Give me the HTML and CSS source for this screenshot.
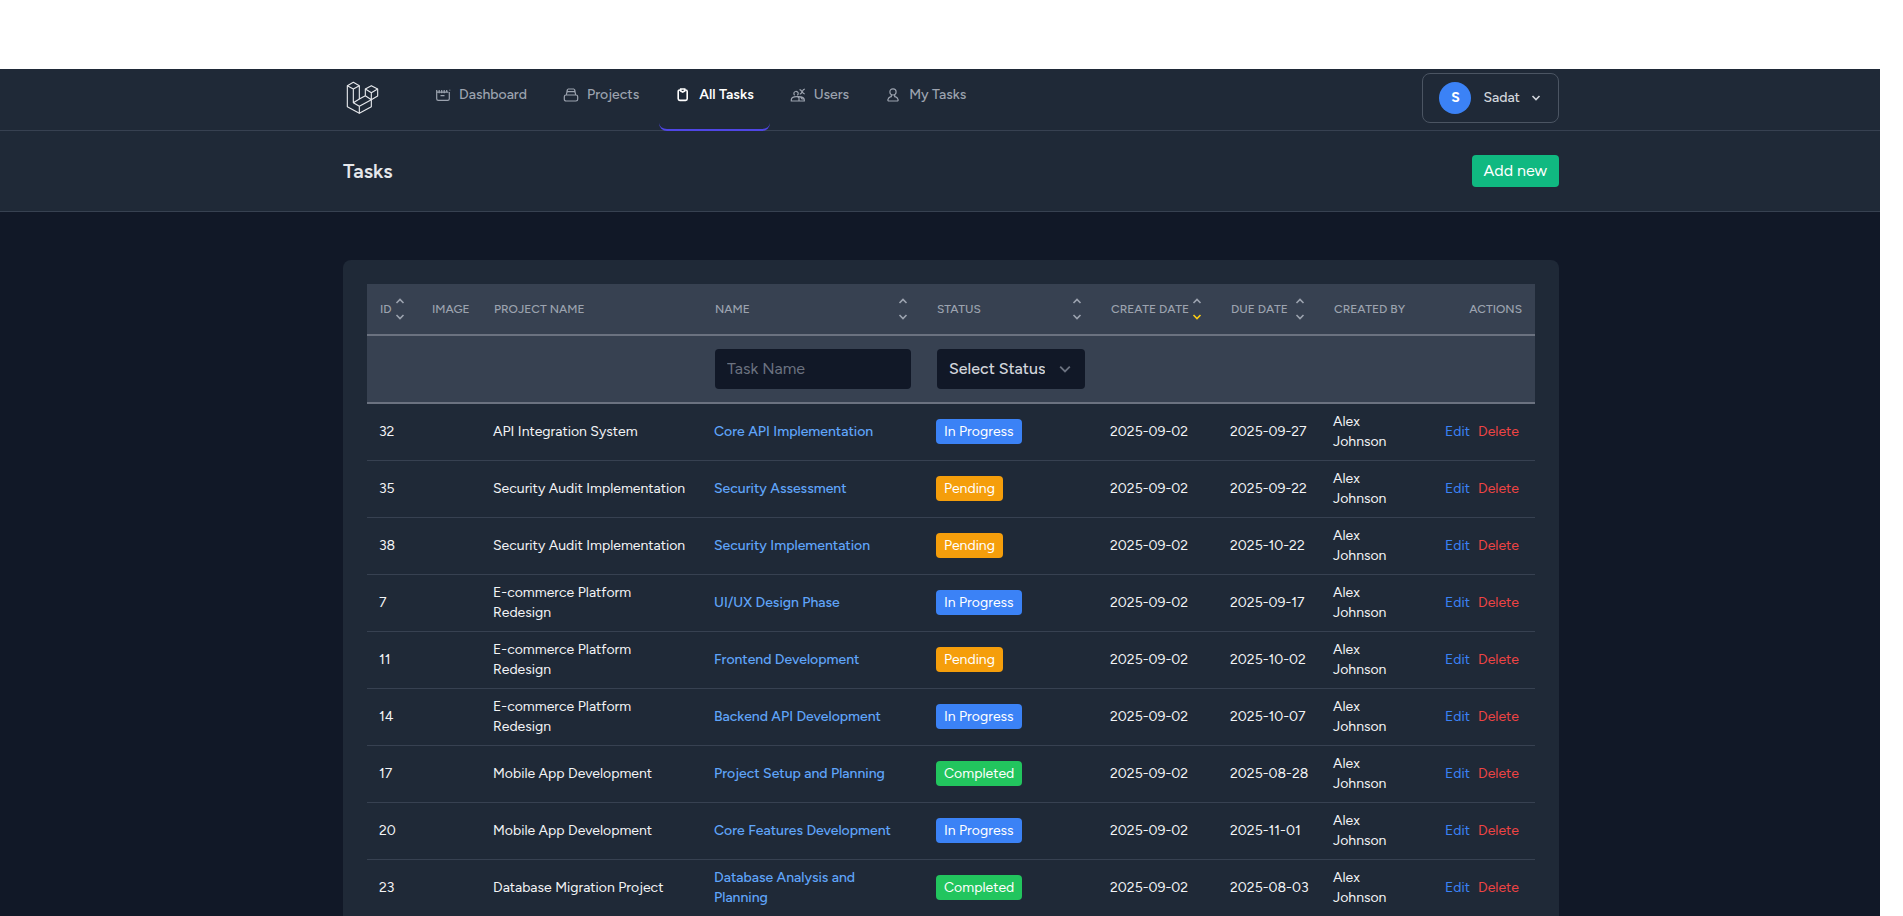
FILE: index.html
```html
<!DOCTYPE html>
<html lang="en">
<head>
    <meta charset="UTF-8">
    <title>Tasks</title>
    <link rel="stylesheet" href="styles.css">
</head>
<body>
    <svg class="sprite" aria-hidden="true">
        <symbol id="chevron-up" viewBox="0 0 16 16"><path d="M4.5 10 8 6.5l3.5 3.5"/></symbol>
        <symbol id="chevron-down" viewBox="0 0 16 16"><path d="M4.5 6 8 9.5 11.5 6"/></symbol>
    </svg>
    <nav class="navbar">
        <div class="container navbar-inner">
            <a href="#" class="logo" aria-label="Home">
                <svg viewBox="39 60 108 108" fill="none" stroke="#e5e7eb" stroke-width="3.4" stroke-linejoin="round">
                    <path d="M70 67 52 77v63l36 20 36-20v-21l19-11V87l-19-10-18 10v20l-18 10V77z"/>
                    <path d="M52 77l18 10 18-10M70 87v41l18 11v21M70 128l18-11M88 139l36-20-18-12M106 87l18 11 19-11M124 98v21"/>
                </svg>
            </a>
            <div class="nav-links">
                <a href="#" class="nav-link">
                    <svg class="nav-icon" viewBox="0 0 16 16"><path d="M1.7 3v8.800c0 1 .6 1.600 1.600 1.600h9.400c1 0 1.600-.6 1.600-1.600V5M1.700 5.200h11.600M4.200 3v3.200M6.700 3v3.200M9.200 3v3.200M11.700 3v2.500M14.800 2.800v.8M5.500 8.700h4"/></svg>
                    Dashboard
                </a>
                <a href="#" class="nav-link">
                    <svg class="nav-icon" viewBox="0 0 16 16"><path d="M4.8 2h6.4M3.8 4.7 4.6 2.2M12.2 4.7l-.8-2.5M3.3 7.8l.5-2.2c.1-.6.5-.9 1-.9h6.4c.5 0 .9.3 1 .9l.5 2.2M3 8h10c1 0 1.7.7 1.7 1.7v2.6c0 1-.7 1.700-1.700 1.700H3c-1 0-1.700-.7-1.700-1.700V9.700C1.300 8.700 2 8 3 8z"/></svg>
                    Projects
                </a>
                <a href="#" class="nav-link active">
                    <svg class="nav-icon" viewBox="0 0 16 16"><path d="M5.500 3H4.800C3.800 3 3.200 3.600 3.200 4.600v7.200c0 1 .6 1.600 1.600 1.600h5.800c1 0 1.600-.6 1.600-1.600V4.600c0-1-.6-1.600-1.600-1.600h-.700M5.700 2h4v2l-2 1-2-1z"/></svg>
                    All Tasks
                </a>
                <a href="#" class="nav-link">
                    <svg class="nav-icon" viewBox="0 0 16 16"><path d="M1.300 14v-1.200C1.300 10.800 3.500 9.600 6.500 9.600h2c3 0 5.800 1.200 5.800 3.200V14zM7.500 9.600l1.500 1.400v3M10.500 9.800l1.500 2.200h1.500M4.600 8.200C3.300 7 3.800 4.800 5.500 4.500c1.500-.3 3 .8 2.700 2.300-.1.700-.5 1.200-1 1.500M9.500 2.600c2.600 0 2.400 4.200 5.200 4.200M14.800 2.200c-3 .3-2.200 4.600-5 5"/></svg>
                    Users
                </a>
                <a href="#" class="nav-link">
                    <svg class="nav-icon" viewBox="0 0 16 16"><path d="M8 1.800c1.900 0 3.100 1.300 3.100 3S9.900 8 8 8 4.900 6.500 4.900 4.800 6.100 1.800 8 1.800zM5.800 9.600c-1.500.5-2.500 1.500-2.900 3.100-.2.800.2 1.300 1 1.300h8.200c.8 0 1.200-.5 1-1.300-.4-1.600-1.400-2.600-2.900-3.100M6.300 7.800v1.800H5.600M9.700 7.800v1.800h.7"/></svg>
                    My Tasks
                </a>
            </div>
            <button type="button" class="user-menu">
                <span class="avatar">S</span>
                <span>Sadat</span>
                <svg class="chevron"><use href="#chevron-down"/></svg>
            </button>
        </div>
    </nav>
    <header class="page-header">
        <div class="container header-inner">
            <h2>Tasks</h2>
            <a href="#" class="btn-add">Add new</a>
        </div>
    </header>
    <main class="container">
        <div class="card">
            <table class="tasks">
                <colgroup>
                    <col class="col-id">
                    <col class="col-image">
                    <col class="col-project">
                    <col class="col-name">
                    <col class="col-status">
                    <col class="col-created">
                    <col class="col-due">
                    <col class="col-author">
                    <col>
                </colgroup>
                <thead>
                    <tr class="titles">
                        <th><div class="sortable">ID <span class="sort"><svg class="chevron"><use href="#chevron-up"/></svg><svg class="chevron"><use href="#chevron-down"/></svg></span></div></th>
                        <th>Image</th>
                        <th>Project Name</th>
                        <th><div class="sortable">Name <span class="sort"><svg class="chevron"><use href="#chevron-up"/></svg><svg class="chevron"><use href="#chevron-down"/></svg></span></div></th>
                        <th><div class="sortable">Status <span class="sort"><svg class="chevron"><use href="#chevron-up"/></svg><svg class="chevron"><use href="#chevron-down"/></svg></span></div></th>
                        <th><div class="sortable">Create Date <span class="sort"><svg class="chevron"><use href="#chevron-up"/></svg><svg class="chevron sorted"><use href="#chevron-down"/></svg></span></div></th>
                        <th><div class="sortable">Due Date <span class="sort"><svg class="chevron"><use href="#chevron-up"/></svg><svg class="chevron"><use href="#chevron-down"/></svg></span></div></th>
                        <th>Created By</th>
                        <th class="right">Actions</th>
                    </tr>
                    <tr class="filters">
                        <th></th>
                        <th></th>
                        <th></th>
                        <th><input type="text" class="field" placeholder="Task Name" aria-label="Task Name"></th>
                        <th>
                            <div class="select-wrap">
                                <select class="field" aria-label="Status">
                                    <option value="">Select Status</option>
                                    <option value="pending">Pending</option>
                                    <option value="in_progress">In Progress</option>
                                    <option value="completed">Completed</option>
                                </select>
                                <svg class="select-arrow" viewBox="0 0 20 20"><path d="M6 8l4 4 4-4"/></svg>
                            </div>
                        </th>
                        <th></th>
                        <th></th>
                        <th></th>
                        <th></th>
                    </tr>
                </thead>
                <tbody>
                    <tr>
                        <td>32</td>
                        <td></td>
                        <td>API Integration System</td>
                        <td><a href="#" class="task-link">Core API Implementation</a></td>
                        <td><span class="badge in-progress">In Progress</span></td>
                        <td class="date">2025-09-02</td>
                        <td class="date">2025-09-27</td>
                        <td>Alex Johnson</td>
                        <td class="actions"><a href="#" class="edit">Edit</a><a href="#" class="delete">Delete</a></td>
                    </tr>
                    <tr>
                        <td>35</td>
                        <td></td>
                        <td>Security Audit Implementation</td>
                        <td><a href="#" class="task-link">Security Assessment</a></td>
                        <td><span class="badge pending">Pending</span></td>
                        <td class="date">2025-09-02</td>
                        <td class="date">2025-09-22</td>
                        <td>Alex Johnson</td>
                        <td class="actions"><a href="#" class="edit">Edit</a><a href="#" class="delete">Delete</a></td>
                    </tr>
                    <tr>
                        <td>38</td>
                        <td></td>
                        <td>Security Audit Implementation</td>
                        <td><a href="#" class="task-link">Security Implementation</a></td>
                        <td><span class="badge pending">Pending</span></td>
                        <td class="date">2025-09-02</td>
                        <td class="date">2025-10-22</td>
                        <td>Alex Johnson</td>
                        <td class="actions"><a href="#" class="edit">Edit</a><a href="#" class="delete">Delete</a></td>
                    </tr>
                    <tr>
                        <td>7</td>
                        <td></td>
                        <td>E-commerce Platform Redesign</td>
                        <td><a href="#" class="task-link">UI/UX Design Phase</a></td>
                        <td><span class="badge in-progress">In Progress</span></td>
                        <td class="date">2025-09-02</td>
                        <td class="date">2025-09-17</td>
                        <td>Alex Johnson</td>
                        <td class="actions"><a href="#" class="edit">Edit</a><a href="#" class="delete">Delete</a></td>
                    </tr>
                    <tr>
                        <td>11</td>
                        <td></td>
                        <td>E-commerce Platform Redesign</td>
                        <td><a href="#" class="task-link">Frontend Development</a></td>
                        <td><span class="badge pending">Pending</span></td>
                        <td class="date">2025-09-02</td>
                        <td class="date">2025-10-02</td>
                        <td>Alex Johnson</td>
                        <td class="actions"><a href="#" class="edit">Edit</a><a href="#" class="delete">Delete</a></td>
                    </tr>
                    <tr>
                        <td>14</td>
                        <td></td>
                        <td>E-commerce Platform Redesign</td>
                        <td><a href="#" class="task-link">Backend API Development</a></td>
                        <td><span class="badge in-progress">In Progress</span></td>
                        <td class="date">2025-09-02</td>
                        <td class="date">2025-10-07</td>
                        <td>Alex Johnson</td>
                        <td class="actions"><a href="#" class="edit">Edit</a><a href="#" class="delete">Delete</a></td>
                    </tr>
                    <tr>
                        <td>17</td>
                        <td></td>
                        <td>Mobile App Development</td>
                        <td><a href="#" class="task-link">Project Setup and Planning</a></td>
                        <td><span class="badge completed">Completed</span></td>
                        <td class="date">2025-09-02</td>
                        <td class="date">2025-08-28</td>
                        <td>Alex Johnson</td>
                        <td class="actions"><a href="#" class="edit">Edit</a><a href="#" class="delete">Delete</a></td>
                    </tr>
                    <tr>
                        <td>20</td>
                        <td></td>
                        <td>Mobile App Development</td>
                        <td><a href="#" class="task-link">Core Features Development</a></td>
                        <td><span class="badge in-progress">In Progress</span></td>
                        <td class="date">2025-09-02</td>
                        <td class="date">2025-11-01</td>
                        <td>Alex Johnson</td>
                        <td class="actions"><a href="#" class="edit">Edit</a><a href="#" class="delete">Delete</a></td>
                    </tr>
                    <tr>
                        <td>23</td>
                        <td></td>
                        <td>Database Migration Project</td>
                        <td><a href="#" class="task-link">Database Analysis and Planning</a></td>
                        <td><span class="badge completed">Completed</span></td>
                        <td class="date">2025-09-02</td>
                        <td class="date">2025-08-03</td>
                        <td>Alex Johnson</td>
                        <td class="actions"><a href="#" class="edit">Edit</a><a href="#" class="delete">Delete</a></td>
                    </tr>
                </tbody>
            </table>
        </div>
    </main>
    <div class="gutter"></div>
</body>
</html>
```
FILE: styles.css
```css
* {
    box-sizing: border-box;
}
body {
    margin: 0;
    padding: 69px 1px 0 0;
    height: 100vh;
    overflow: hidden;
    font-family: Figtree, Lato, sans-serif;
    font-size: 14px;
    line-height: 20px;
    color: #f3f4f6;
    background: linear-gradient(#fff 69px, #111827 69px);
}
a {
    text-decoration: none;
    color: inherit;
}
.sprite {
    display: none;
}
.container {
    max-width: 1280px;
    margin: 0 auto;
    padding: 0 32px;
}
/* white strip beside the page */
.gutter {
    position: fixed;
    top: 0;
    right: 0;
    bottom: 0;
    width: 23px;
    background-color: #fff;
}

/* navigation */
.navbar {
    background-color: #1f2937;
    border-bottom: 1px solid #374151;
}
.navbar-inner {
    display: flex;
    height: 61px;
}
.logo {
    margin-top: 11px;
}
.logo svg {
    display: block;
    width: 36px;
    height: 36px;
}
.nav-links {
    display: flex;
    gap: 4px;
    margin: 0 auto -1px 40px;
}
.nav-link {
    display: flex;
    align-items: center;
    gap: 8px;
    padding: 0 16px 9px;
    border-bottom: 2px solid transparent;
    border-radius: 8px;
    font-weight: 500;
    color: #9ca3af;
}
.nav-link:hover {
    color: #e5e7eb;
}
.nav-link.active {
    font-weight: 600;
    color: #fff;
    border-bottom-color: #4f46e5;
}
.nav-icon {
    width: 16px;
    height: 16px;
    fill: none;
    stroke: currentColor;
    stroke-width: 1.2;
}
.nav-link.active .nav-icon {
    stroke-width: 1.6;
}
.user-menu {
    display: flex;
    align-items: center;
    height: 50px;
    margin-top: 4px;
    padding: 0 14px 0 16px;
    background: transparent;
    border: 1px solid #4b5563;
    border-radius: 8px;
    font: inherit;
    font-weight: 500;
    color: #d1d5db;
    cursor: pointer;
}
.avatar {
    width: 32px;
    margin-right: 12px;
    border-radius: 50%;
    background-color: #3b82f6;
    color: #fff;
    font-weight: 700;
    line-height: 32px;
}
.user-menu .chevron {
    margin-left: 8px;
}
.chevron {
    display: block;
    width: 16px;
    height: 16px;
    fill: none;
    stroke: currentColor;
    stroke-width: 1.6;
}

/* page heading */
.page-header {
    background-color: #1f2937;
    border-bottom: 1px solid #374151;
}
.header-inner {
    display: flex;
    justify-content: space-between;
    align-items: center;
    height: 80px;
}
.page-header h2 {
    margin: 0;
    font-size: 20px;
    font-weight: 600;
    line-height: 25px;
    color: #e5e7eb;
}
.btn-add {
    padding: 4px 12px;
    border-radius: 4px;
    background-color: #10b981;
    color: #fff;
    font-size: 16px;
    line-height: 24px;
}

/* tasks table */
.card {
    margin-top: 48px;
    padding: 24px;
    border-radius: 8px;
    background-color: #1f2937;
}
.tasks {
    width: 100%;
    table-layout: fixed;
    border-spacing: 0;
}
.col-id { width: 52px; }
.col-image { width: 62px; }
.col-project { width: 221px; }
.col-name { width: 222px; }
.col-status { width: 174px; }
.col-created { width: 120px; }
.col-due { width: 103px; }
.col-author { width: 102px; }
.tasks th {
    padding: 0 13px;
    background-color: #374151;
    border-bottom: 2px solid #6b7280;
    font-size: 12px;
    font-weight: 500;
    text-align: left;
    text-transform: uppercase;
    white-space: nowrap;
    color: #9ca3af;
}
.titles th {
    height: 52px;
}
.filters th {
    height: 68px;
}
.tasks .right {
    text-align: right;
}
.sortable {
    display: flex;
    justify-content: space-between;
    align-items: center;
}
.sorted {
    color: #facc15;
}
.field {
    display: block;
    width: 100%;
    height: 40px;
    padding: 7px 12px 9px;
    border: 0;
    border-radius: 4px;
    background-color: #111827;
    font-family: inherit;
    font-size: 16px;
    color: #d1d5db;
}
.field::placeholder {
    color: #6b7280;
}
select.field {
    appearance: none;
    padding-right: 40px;
    font-weight: 500;
}
.select-wrap {
    position: relative;
}
.select-arrow {
    position: absolute;
    top: 8px;
    right: 8px;
    width: 24px;
    height: 24px;
    fill: none;
    stroke: #6b7280;
    stroke-width: 1.5;
    pointer-events: none;
}
.tasks td {
    height: 57px;
    padding: 8px 12px;
    border-bottom: 1px solid #374151;
}
.tasks .date {
    white-space: nowrap;
}
.task-link {
    font-weight: 500;
    color: #60a5fa;
}
.badge {
    padding: 4px 8px;
    border-radius: 4px;
    color: #fff;
}
.in-progress {
    background-color: #3b82f6;
}
.pending {
    background-color: #f59e0b;
}
.completed {
    background-color: #22c55e;
}
.tasks .actions {
    padding-right: 16px;
    text-align: right;
    white-space: nowrap;
}
.edit {
    margin-right: 8px;
    color: #3b82f6;
}
.delete {
    color: #ef4444;
}
```
